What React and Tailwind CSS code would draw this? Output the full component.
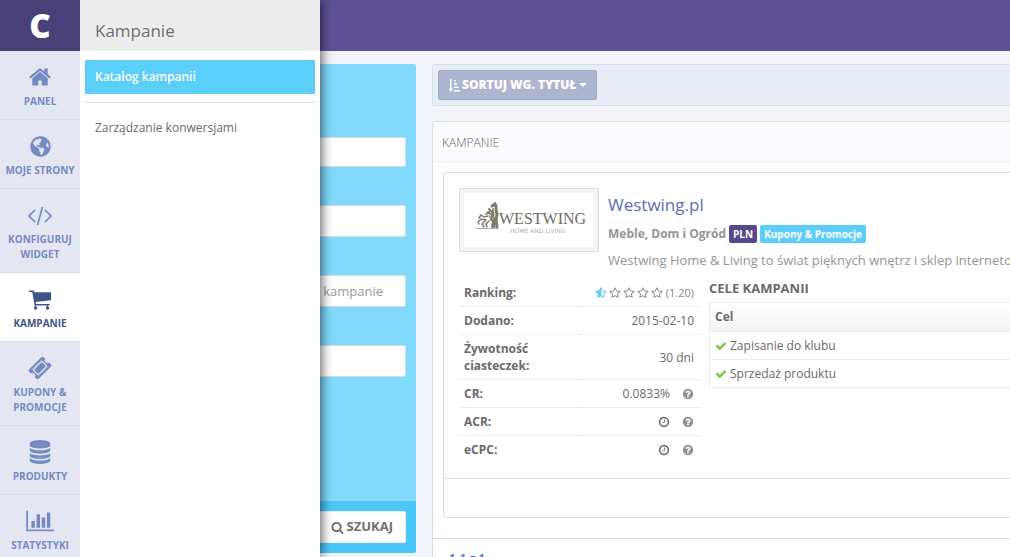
import { clsx } from 'clsx';
import { FaGlobeAmericas } from 'react-icons/fa';

const STAR_SHAPE = 'M1728 647q0 22-26 48l-363 354 86 500q1 7 1 20 0 50-41 50-19 0-40-12l-449-236-449 236q-22 12-40 12-21 0-31.5-14.5t-10.5-35.5q0-6 2-20l86-500-364-354q-25-27-25-48 0-37 56-46l502-73 225-455q19-41 49-41t49 41l225 455 502 73q56 9 56 46z';

const paths = {
  home: 'M1472 992v480q0 26-19 45t-45 19h-384v-384h-256v384h-384q-26 0-45-19t-19-45v-480q0-1 .5-3t.5-3l575-474 575 474q1 2 1 6zm223-69l-62 74q-8 9-21 11h-3q-13 0-21-7l-692-577-692 577q-12 8-24 7-13-2-21-11l-62-74q-8-10-7-23.5t11-21.5l719-599q32-26 76-26t76 26l244 204v-195q0-14 9-23t23-9h192q14 0 23 9t9 23v408l219 182q10 8 11 21.5t-7 23.5z',
  ticket: 'M1024 452l316 316-572 572-316-316zm-211 979l618-618q19-19 19-45t-19-45l-362-362q-18-18-45-18t-45 18l-618 618q-19 19-19 45t19 45l362 362q18 18 45 18t45-18zm889-637l-907 908q-37 37-90.5 37t-90.5-37l-126-126q56-56 56-136t-56-136-136-56-136 56l-125-126q-37-37-37-90.5t37-90.5l907-906q37-37 90.5-37t90.5 37l125 125q-56 56-56 136t56 136 136 56 136-56l126 125q37 37 37 90.5t-37 90.5z',
  database: 'M896 768q237 0 443-43t325-127v170q0 69-103 128t-280 93.5-385 34.5-385-34.5-280-93.5-103-128v-170q119 84 325 127t443 43zm0 768q237 0 443-43t325-127v170q0 69-103 128t-280 93.5-385 34.5-385-34.5-280-93.5-103-128v-170q119 84 325 127t443 43zm0-384q237 0 443-43t325-127v170q0 69-103 128t-280 93.5-385 34.5-385-34.5-280-93.5-103-128v-170q119 84 325 127t443 43zm0-1152q208 0 385 34.5t280 93.5 103 128v128q0 69-103 128t-280 93.5-385 34.5-385-34.5-280-93.5-103-128v-128q0-69 103-128t280-93.5 385-34.5z',
  search: 'M1216 832q0-185-131.5-316.5t-316.5-131.5-316.5 131.5-131.5 316.5 131.5 316.5 316.5 131.5 316.5-131.5 131.5-316.5zm512 832q0 52-38 90t-90 38q-54 0-90-38l-343-342q-179 124-399 124-143 0-273.5-55.5t-225-150-150-225-55.5-273.5 55.5-273.5 150-225 225-150 273.5-55.5 273.5 55.5 225 150 150 225 55.5 273.5q0 220-124 399l343 343q37 37 37 90z',
  check: 'M1671 566q0 40-28 68l-724 724-136 136q-28 28-68 28t-68-28l-136-136-362-362q-28-28-28-68t28-68l136-136q28-28 68-28t68 28l294 295 656-657q28-28 68-28t68 28l136 136q28 28 28 68z',
  clock: 'M1024 544v448q0 14-9 23t-23 9h-320q-14 0-23-9t-9-23v-64q0-14 9-23t23-9h224v-352q0-14 9-23t23-9h64q14 0 23 9t9 23zm416 352q0-148-73-273t-198-198-273-73-273 73-198 198-73 273 73 273 198 198 273 73 273-73 198-198 73-273zm224 0q0 209-103 385.5t-279.5 279.5-385.5 103-385.5-103-279.5-279.5-103-385.5 103-385.5 279.5-279.5 385.5-103 385.5 103 279.5 279.5 103 385.5z',
  question: 'M1024 1376v-192q0-14-9-23t-23-9h-192q-14 0-23 9t-9 23v192q0 14 9 23t23 9h192q14 0 23-9t9-23zm256-672q0-88-55.5-163t-138.5-116-170-41q-243 0-371 213-15 24 8 42l132 100q7 6 19 6 16 0 25-12 53-68 86-92 34-24 86-24 48 0 85.5 26t37.5 59q0 38-20 61t-68 45q-63 28-115.5 86.5t-52.5 125.5v36q0 14 9 23t23 9h192q14 0 23-9t9-23q0-19 21.5-49.5t54.5-49.5q32-18 49-28.5t46-35 44.5-48 28-60.5 12.5-81zm384 192q0 209-103 385.5t-279.5 279.5-385.5 103-385.5-103-279.5-279.5-103-385.5 103-385.5 279.5-279.5 385.5-103 385.5 103 279.5 279.5 103 385.5z',
  star: 'M1201 1004l306-297-422-62-189-382-189 382-422 62 306 297-73 421 378-199 377 199zm527-357q0 22-26 48l-363 354 86 500q1 7 1 20 0 50-41 50-19 0-40-12l-449-236-449 236q-22 12-40 12-21 0-31.5-14.5t-10.5-35.5q0-6 2-20l86-500-364-354q-25-27-25-48 0-37 56-46l502-73 225-455q19-41 49-41t49 41l225 455 502 73q56 9 56 46z',
};

function Icon({ name, className }) {
  return (
    <svg viewBox="0 0 1792 1792" fill="currentColor" aria-hidden="true" className={className}>
      <path d={paths[name]} />
    </svg>
  );
}

function HalfStar({ className }) {
  return (
    <svg viewBox="0 0 1792 1792" fill="currentColor" aria-hidden="true" className={className}>
      <clipPath id="leftHalf"><rect width="896" height="1792" /></clipPath>
      <path d={STAR_SHAPE} clipPath="url(#leftHalf)" />
      <path d={paths.star} />
    </svg>
  );
}

function CodeIcon() {
  return (
    <svg viewBox="0 0 26 20" fill="none" stroke="currentColor" strokeWidth="1.7" aria-hidden="true" className="mt-[2px] h-5 w-[26px]">
      <path d="M8 4L2 10l6 6M18 4l6 6-6 6M15.500 1l-5 18" />
    </svg>
  );
}

function CartIcon() {
  return (
    <svg viewBox="0 0 24 20" fill="currentColor" aria-hidden="true" className="mt-[2px] h-5 w-6">
      <path d="M1 .500h4.800l.6 1.700H23v8L7.700 12l.2 2H21.500v1.500H6.500L4.300 2H1z" />
      <circle cx="7.500" cy="18" r="1.700" />
      <circle cx="19.500" cy="18" r="1.700" />
      <path d="M7 15h1v2H7zM19 15h1v2h-1z" />
    </svg>
  );
}

function ChartIcon() {
  return (
    <svg viewBox="0 0 2048 1792" fill="currentColor" aria-hidden="true" className="h-6 w-7">
      <path d="M640 896v512h-256v-512h256zm384-512v1024h-256v-1024h256zm1024 1152v128h-2048v-1536h128v1408h1920zm-640-896v768h-256v-768h256zm384-384v1152h-256v-1152h256z" />
    </svg>
  );
}

const navItems = [
  { label: 'PANEL', icon: <Icon name="home" className="size-6" /> },
  { label: 'MOJE STRONY', icon: <FaGlobeAmericas className="size-[21px]" /> },
  { label: 'KONFIGURUJ WIDGET', icon: <CodeIcon /> },
  { label: 'KAMPANIE', icon: <CartIcon />, active: true },
  { label: 'KUPONY & PROMOCJE', icon: <Icon name="ticket" className="size-6" /> },
  { label: 'PRODUKTY', icon: <Icon name="database" className="size-6" /> },
  { label: 'STATYSTYKI', icon: <ChartIcon /> },
];

function Sidebar() {
  return (
    <aside className="z-20 w-20 shrink-0 bg-[#e4e7f2]">
      <a href="#" className="flex h-[51px] items-center justify-center bg-[#4a4078] text-[33px] font-extrabold text-white">C</a>
      <nav>
        {navItems.map(item => (
          <a
            key={item.label}
            href="#"
            className={clsx(
              'flex flex-col items-center border-b border-[#d8dce9] px-1 pt-[14px] pb-[10px] text-center text-[10px] leading-[15px] font-bold',
              item.active ? 'bg-white text-[#41558b]' : 'text-[#748ac2]'
            )}
          >
            <span className="mb-[5px] flex h-6 items-center">{item.icon}</span>
            {item.label}
          </a>
        ))}
      </nav>
    </aside>
  );
}

function Submenu() {
  return (
    <div className="absolute inset-y-0 left-0 z-10 w-60 bg-white shadow-[2px_0_10px_rgba(0,0,0,0.6)]">
      <h2 className="flex h-[51px] items-end bg-[#ededed] px-[15px] pb-2 text-[17px] leading-6 text-[#6f6f6f]">Kampanie</h2>
      <ul className="px-[5px] pt-[9px] text-xs leading-[34px]">
        <li className="mb-2"><a href="#" className="block bg-[#5bcefa] px-[10px] font-semibold text-white">Katalog kampanii</a></li>
        <li className="border-t border-[#e0e0e0] pt-2"><a href="#" className="block px-[10px] text-[#6a6a6a]">Zarządzanie konwersjami</a></li>
      </ul>
    </div>
  );
}

const field = 'block w-full rounded-xs border border-[#d3dbe8] bg-white pr-[22px] text-right text-[13px] text-[#888] placeholder:text-[#999]';

function SearchForm() {
  return (
    <form className="w-80 shrink-0">
      <div className="flex h-[437px] flex-col gap-[38px] rounded-t-xs bg-[#81dafb] px-[10px] pt-[73px]">
        <input aria-label="Nazwa" className={clsx(field, 'h-[30px]')} />
        <input aria-label="Kategoria" className={clsx(field, 'h-8')} />
        <input aria-label="Typ" placeholder="kampanie" className={clsx(field, 'h-8')} />
        <input aria-label="Waluta" className={clsx(field, 'h-8')} />
      </div>
      <div className="flex justify-end rounded-b-xs bg-[#4bc8f8] p-[10px]">
        <button type="button" className="flex h-8 items-center gap-[3px] rounded-xs border border-[#e8eef4] bg-white px-3 text-[13px] font-bold text-[#6f6f6f]">
          <Icon name="search" className="size-[13px]" />
          SZUKAJ
        </button>
      </div>
    </form>
  );
}

function WestwingLogo() {
  return (
    <svg viewBox="0 0 130 54" role="img" aria-label="Westwing Home and Living" className="h-[54px] w-full bg-white">
      <g fill="none" stroke="#7d7b70" strokeLinecap="round">
        <path d="M28 13l3-2 1 2v4l1 5-1 5 1 7" strokeWidth="3" />
        <path d="M25 16l3 3M24 19l4 3-1 5M29 16v7l2 5-1 6M26 24l3 4-1 6M22 21l3-2" strokeWidth="2" />
        <path d="M24 23l-4 1-3-2-2 3M22 27l-5-1-3 3 1 2M21 28l-3 3 2 3M25 28l-3 3 1 3" strokeWidth="1.500" />
        <path d="M12 35.500h22" strokeWidth=".6" />
      </g>
      <path d="M28 14l1 3 2 3-1 5M25 22l2 3" fill="none" stroke="#b9b7ad" strokeWidth=".8" />
      <text x="35" y="31" fill="#6d6b62" fontSize="16" fontFamily="Liberation Serif, serif">WESTWING</text>
      <text x="46" y="40" fill="#b4b2aa" fontSize="6" fontFamily="DejaVu Sans, sans-serif">HOME AND LIVING</text>
    </svg>
  );
}

function Rating() {
  return (
    <span className="flex items-center justify-end gap-[2px] text-[11px] text-[#858585]">
      <HalfStar className="size-3 text-[#5bcefa]" />
      {[2, 3, 4, 5].map(n => <Icon key={n} name="star" className="size-3" />)}
      <span className="ml-px">(1.20)</span>
    </span>
  );
}

function WithHelp({ children }) {
  return (
    <span className="flex items-center justify-end gap-3">
      {children}
      <Icon name="question" className="size-3 text-[#909090]" />
    </span>
  );
}

const details = [
  { label: 'Ranking:', value: <Rating /> },
  { label: 'Dodano:', value: '2015-02-10' },
  { label: 'Żywotność ciasteczek:', value: '30 dni' },
  { label: 'CR:', value: <WithHelp>0.0833%</WithHelp> },
  { label: 'ACR:', value: <WithHelp><Icon name="clock" className="size-3" /></WithHelp> },
  { label: 'eCPC:', value: <WithHelp><Icon name="clock" className="size-3" /></WithHelp> },
];

const goals = ['Zapisanie do klubu', 'Sprzedaż produktu'];

function Campaign() {
  return (
    <article className="rounded-[3px] border border-[#d5deec]">
      <div className="p-[15px]">
        <div className="flex gap-[9px]">
          <div className="h-16 w-[140px] shrink-0 rounded-xs border border-[#ddd] bg-[#f3f4f9] p-1">
            <WestwingLogo />
          </div>
          <div className="whitespace-nowrap">
            <h3 className="pt-[5px] text-[17px] leading-6"><a href="#" className="text-[#5870b4]">Westwing.pl</a></h3>
            <p className="mt-2 flex h-[18px] items-center text-xs font-bold text-[#949494]">
              Meble, Dom i Ogród
              <span className="ml-[3px] rounded-xs bg-[#57498d] px-1 text-[10px] leading-[18px] text-white">PLN</span>
              <span className="ml-[3px] rounded-xs bg-[#5bcefa] px-1 text-[10px] leading-[18px] text-white">Kupony &amp; Promocje</span>
            </p>
            <p className="mt-2 text-[13px] leading-[18px] text-[#949494]">Westwing Home &amp; Living to świat pięknych wnętrz i sklep internetowy</p>
          </div>
        </div>
        <div className="mt-[10px] flex items-start gap-[9px]">
          <table className="w-[241px] shrink-0 table-fixed text-xs leading-[17px] text-[#6a6a6a]">
            <tbody>
              {details.map(row => (
                <tr key={row.label} className="border-b border-dotted border-[#ddd] last:border-0">
                  <th scope="row" className="px-[5px] py-[5px] text-left font-bold">{row.label}</th>
                  <td className="py-[5px] pr-[6px] text-right whitespace-nowrap">{row.value}</td>
                </tr>
              ))}
            </tbody>
          </table>
          <div className="flex-1 text-xs text-[#6a6a6a]">
            <h4 className="mb-[5px] text-[13px] leading-[18px] font-bold">CELE KAMPANII</h4>
            <table className="w-full border border-[#e9ecf5]">
              <thead>
                <tr className="border-b border-[#e9ecf5] bg-linear-to-b from-white to-[#f3f3f3]">
                  <th className="h-[29px] px-[5px] text-left font-bold">Cel</th>
                </tr>
              </thead>
              <tbody>
                {goals.map(goal => (
                  <tr key={goal} className="border-b border-[#e9ecf5]">
                    <td className="h-7 px-[5px]">
                      <span className="flex items-center gap-[3px]">
                        <Icon name="check" className="size-3 text-[#7fcb3c]" />
                        {goal}
                      </span>
                    </td>
                  </tr>
                ))}
              </tbody>
            </table>
          </div>
        </div>
      </div>
      <div className="h-[39px] border-t border-[#d5deec]" />
    </article>
  );
}

export default function App() {
  return (
    <div className="flex h-screen overflow-hidden bg-[#f3f4f9] font-['Open_Sans',sans-serif]">
      <Sidebar />
      <div className="relative min-w-0 flex-1">
        <Submenu />
        <header className="h-[51px] bg-[#5e5195]" />
        <div className="flex items-start gap-4 pt-[13px] pl-4">
          <SearchForm />
          <main className="min-w-[640px] flex-1">
            <div className="rounded-xs border border-[#d5deec] bg-[#e9edf6] p-[5px]">
              <button type="button" className="flex h-[30px] items-center gap-[2px] rounded-xs border border-[#9ba7c4] bg-[#adb5cf] px-[9px] text-xs font-extrabold text-white">
                <svg viewBox="0 0 12 13" fill="currentColor" aria-hidden="true" className="h-[13px] w-3">
                  <path d="M2 0h1.500v9.500H5L2.750 13 .500 9.500H2zM6 1h2v1.500H6zM6 4h3v1.500H6zM6 7.500h4.500V9H6zM6 11h6v1.500H6z" />
                </svg>
                SORTUJ WG. TYTUŁ
                <svg viewBox="0 0 8 4" fill="currentColor" aria-hidden="true" className="h-1 w-2"><path d="M0 0h8L4 4z" /></svg>
              </button>
            </div>
            <section className="mt-[15px] rounded-xs border border-[#d5deec] bg-white">
              <h2 className="flex h-10 items-center border-b border-[#e9edf5] bg-[#fbfbfe] px-[9px] pt-[2px] text-xs font-light text-[#5f6378]">KAMPANIE</h2>
              <div className="px-[10px] pt-[10px] pb-5">
                <Campaign />
              </div>
              <div className="border-t border-[#d5deec] px-4 py-3 text-xs font-semibold text-[#5870b4]">1-1 z 1</div>
            </section>
          </main>
        </div>
      </div>
    </div>
  );
}
